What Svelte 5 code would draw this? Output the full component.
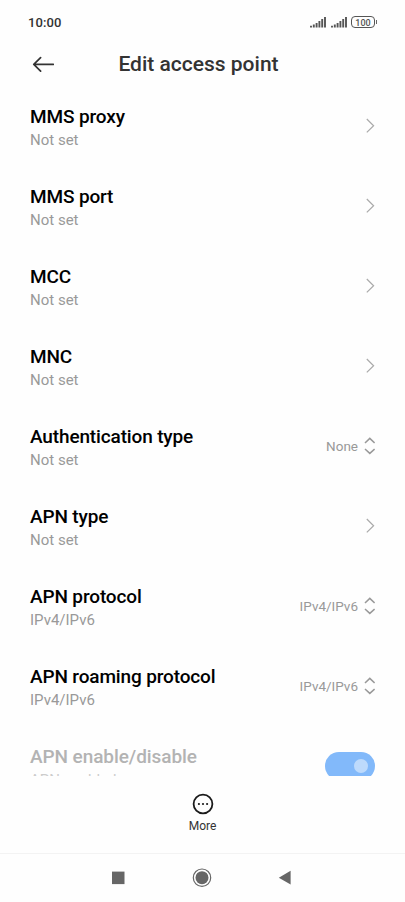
<script lang="ts">
  type Row = {
    title: string;
    summary: string;
    kind: "link" | "select" | "switch";
    value?: string;
  };

  const rows: Row[] = [
    { title: "MMS proxy", summary: "Not set", kind: "link" },
    { title: "MMS port", summary: "Not set", kind: "link" },
    { title: "MCC", summary: "Not set", kind: "link" },
    { title: "MNC", summary: "Not set", kind: "link" },
    { title: "Authentication type", summary: "Not set", kind: "select", value: "None" },
    { title: "APN type", summary: "Not set", kind: "link" },
    { title: "APN protocol", summary: "IPv4/IPv6", kind: "select", value: "IPv4/IPv6" },
    { title: "APN roaming protocol", summary: "IPv4/IPv6", kind: "select", value: "IPv4/IPv6" },
    { title: "APN enable/disable", summary: "APN enabled", kind: "switch" },
  ];
</script>

{#snippet signal()}
  <svg class="signal" width="16" height="12" viewBox="0 0 16 12">
    <path d="M1 9.8V11.5M3.8 8.6V11.5M6.6 7V11.5M9.4 5V11.5M12.2 3V11.5M15 1V11.5" />
  </svg>
{/snippet}

<div class="screen">
  <div class="status">
    <span class="time">10:00</span>
    <div class="indicators">
      {@render signal()}
      {@render signal()}
      <div class="battery"><span>100</span></div>
      <i class="cap"></i>
    </div>
  </div>

  <header>
    <button class="back" aria-label="Back">
      <svg width="22" height="16" viewBox="0 0 22 16">
        <path d="M8.6 1.6L1.8 8.4L8.6 15.2M2 8.4H21.3" />
      </svg>
    </button>
    <h1>Edit access point</h1>
  </header>

  <main>
    {#each rows as row}
      <div class="row" class:disabled={row.kind === "switch"}>
        <div class="text">
          <div class="title">{row.title}</div>
          <div class="summary">{row.summary}</div>
        </div>
        {#if row.kind === "link"}
          <svg class="chevron" width="10" height="16" viewBox="0 0 10 16">
            <path d="M1.8 1L8.6 7.7L1.8 14.4" />
          </svg>
        {:else if row.kind === "select"}
          <span class="value">{row.value}</span>
          <svg class="updown" width="12" height="18" viewBox="0 0 12 18">
            <path d="M2 6L6.8 1.4L11.6 6M2 12L6.8 16.4L11.6 12" />
          </svg>
        {:else}
          <div class="switch"><i></i></div>
        {/if}
      </div>
    {/each}
  </main>

  <button class="more">
    <svg width="22" height="22" viewBox="0 0 22 22">
      <circle class="ring" cx="11" cy="11" r="9.4" />
      <circle cx="6.9" cy="11" r="1.1" />
      <circle cx="11" cy="11" r="1.1" />
      <circle cx="15.1" cy="11" r="1.1" />
    </svg>
    <span>More</span>
  </button>

  <nav>
    <svg width="20" height="20" viewBox="0 0 20 20">
      <rect x="4" y="3.6" width="12.5" height="12.5" />
    </svg>
    <svg width="20" height="20" viewBox="0 0 20 20">
      <circle class="outline" cx="10" cy="9.7" r="8.7" />
      <circle cx="10" cy="9.7" r="6.5" />
    </svg>
    <svg width="20" height="20" viewBox="0 0 20 20">
      <path d="M2.8 9.7L14.6 2.8V16.6Z" />
    </svg>
  </nav>
</div>

<style>
  :global(body) {
    background: #fefefe;
  }

  .screen {
    display: flex;
    flex-direction: column;
    height: 902px;
    overflow: hidden;
    background: #fefefe;
    font-family: Roboto, sans-serif;
  }

  svg {
    display: block;
    flex: none;
  }

  button {
    padding: 0;
    border: none;
    background: none;
    font: inherit;
  }

  .status {
    display: flex;
    justify-content: space-between;
    align-items: center;
    height: 44px;
    padding: 0 28px;
    box-sizing: border-box;
  }

  .time {
    font-size: 13px;
    font-weight: 500;
    letter-spacing: 0.1px;
    color: #333;
  }

  .indicators {
    display: flex;
    align-items: center;
  }

  .signal {
    margin-right: 4.5px;
  }

  .signal path {
    stroke: #555;
    stroke-width: 1.9;
  }

  .battery {
    display: flex;
    align-items: center;
    justify-content: center;
    width: 24px;
    height: 12px;
    box-sizing: border-box;
    border: 1.5px solid #555;
    border-radius: 4px;
    font-size: 9px;
    font-weight: 500;
    line-height: 10px;
    color: #555;
  }

  .battery span {
    padding-top: 1px;
  }

  .cap {
    width: 1.5px;
    height: 4px;
    margin-left: 0.5px;
    background: #666;
  }

  header {
    display: grid;
    grid-template-columns: 60px 1fr 60px;
    align-items: center;
    height: 42px;
    padding-bottom: 2px;
    box-sizing: border-box;
    flex: none;
  }

  .back {
    padding-left: 32px;
  }

  .back path {
    fill: none;
    stroke: #333;
    stroke-width: 1.7;
    stroke-linecap: round;
    stroke-linejoin: round;
  }

  h1 {
    margin: 0;
    padding-right: 8px;
    font-size: 21px;
    font-weight: 500;
    line-height: 24px;
    text-align: center;
    color: #333;
  }

  main {
    height: 690px;
    flex: none;
    overflow: hidden;
  }

  .row {
    display: flex;
    align-items: center;
    height: 80px;
    padding: 0 30px;
  }

  .text {
    flex: 1;
    padding-top: 4px;
  }

  .title {
    font-size: 19px;
    font-weight: 500;
    line-height: 24px;
    letter-spacing: -0.14px;
    color: #000;
  }

  .summary {
    font-size: 15px;
    line-height: 22px;
    color: #999;
  }

  .disabled .title {
    letter-spacing: -0.08px;
    color: #b3b3b3;
  }

  .disabled .summary {
    color: #ccc;
  }

  .chevron path {
    fill: none;
    stroke: #aaa;
    stroke-width: 1.2;
  }

  .value {
    margin-right: 5px;
    font-size: 13.5px;
    color: #999;
  }

  .updown path {
    fill: none;
    stroke: #999;
    stroke-width: 1.5;
  }

  .switch {
    display: flex;
    align-items: center;
    justify-content: flex-end;
    width: 50px;
    height: 28px;
    padding-right: 7px;
    box-sizing: border-box;
    border-radius: 14px;
    background: #82b9fa;
  }

  .switch i {
    width: 14px;
    height: 14px;
    border-radius: 50%;
    background: #bddafc;
  }

  .more {
    display: flex;
    flex-direction: column;
    align-items: center;
    height: 77px;
    padding-top: 17px;
    box-sizing: border-box;
    color: #333;
  }

  .more span {
    margin-top: 4px;
    font-size: 12px;
    line-height: 15px;
  }

  .more circle {
    fill: #1a1a1a;
  }

  .more .ring {
    fill: none;
    stroke: #1a1a1a;
    stroke-width: 1.8;
  }

  nav {
    display: flex;
    justify-content: center;
    gap: 64px;
    height: 49px;
    padding: 14px 0.6px 0 0;
    box-sizing: border-box;
    border-top: 1px solid #f3f3f3;
  }

  nav svg {
    fill: #666;
  }

  nav .outline {
    fill: none;
    stroke: #666;
    stroke-width: 1.2;
  }
</style>
